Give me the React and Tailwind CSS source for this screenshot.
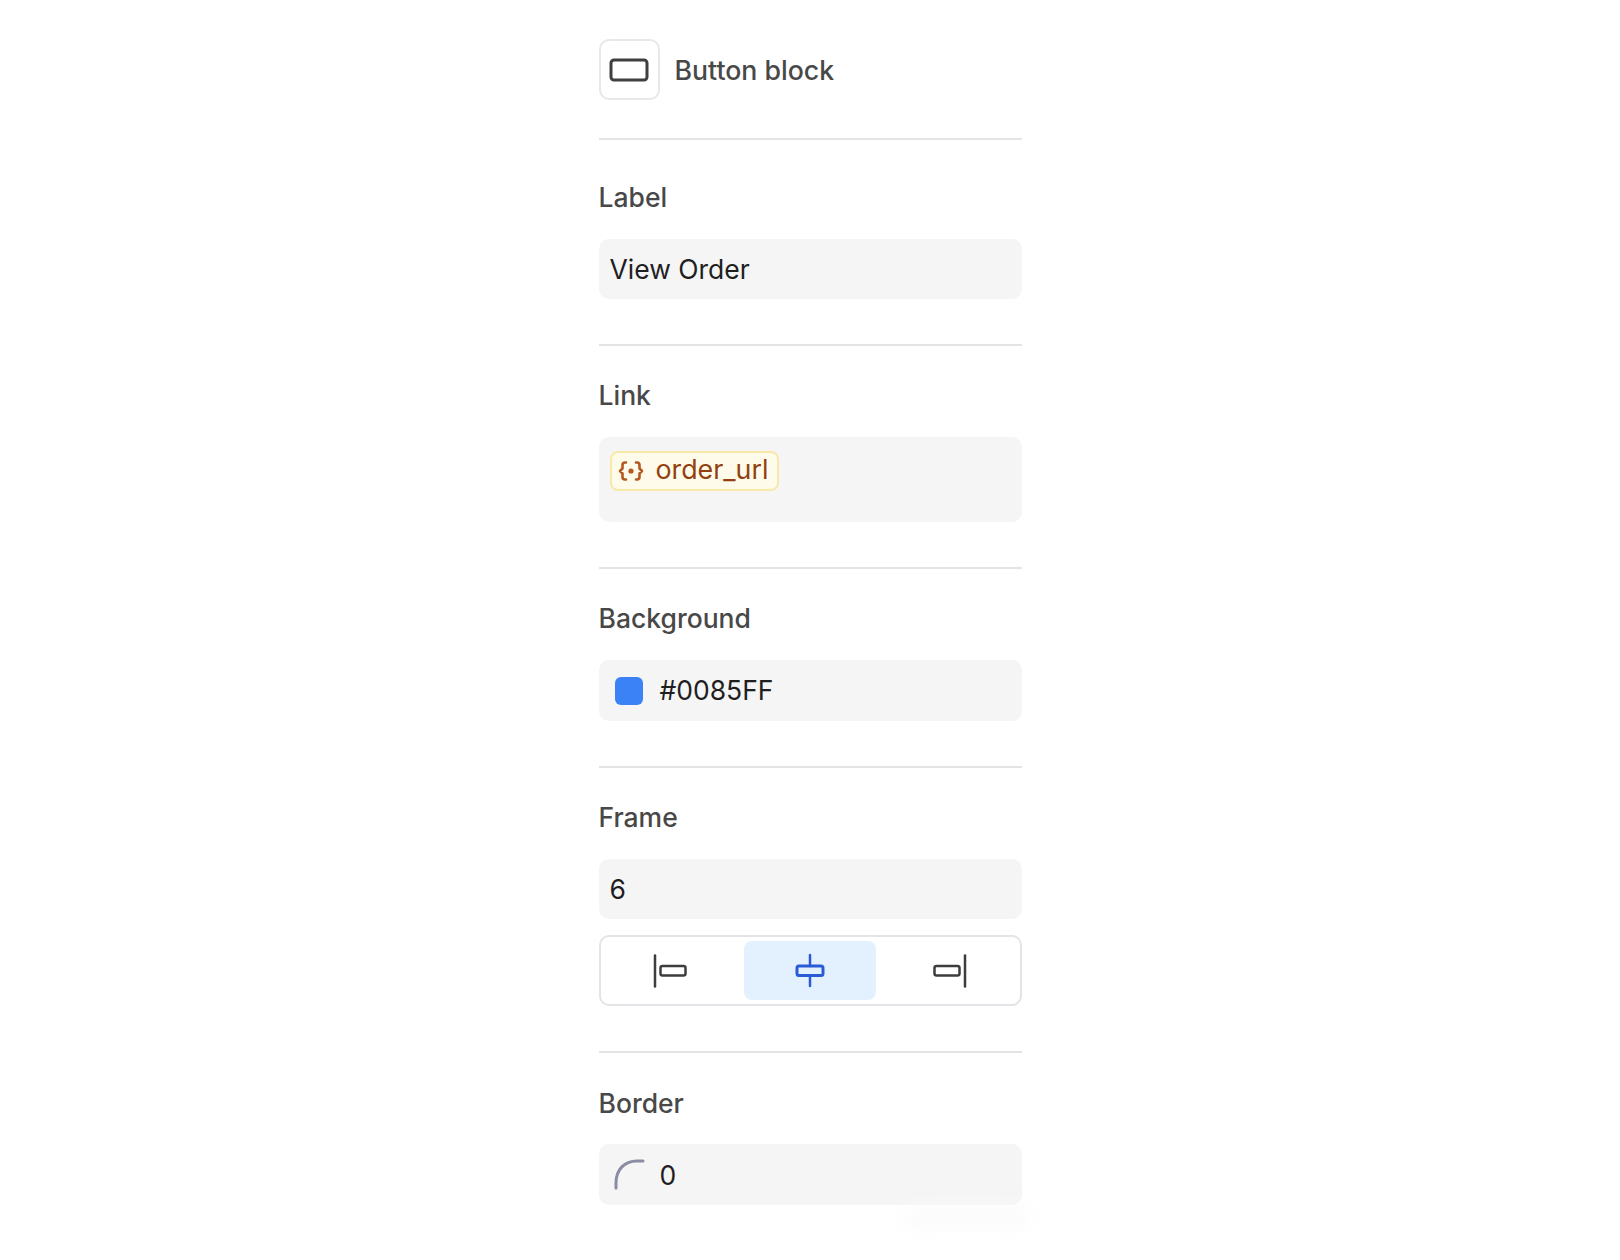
const FONT = "font-['Inter',sans-serif]";

function Field({ children, tall }) {
  return (
    <div
      className={`flex items-center rounded-[10px] bg-[#f5f5f6] px-[11px] pt-[1px] text-[26.5px] text-[#1f1f1f] ${tall ? "h-[61px]" : "h-[60px]"}`}
    >
      {children}
    </div>
  );
}

function Section({ label, first, last, children }) {
  return (
    <section
      className={`border-[#e4e4e6] ${last ? "pt-[33px]" : "border-b-2 pb-[45px]"} ${first ? "pt-[40px]" : ""} ${!first && !last ? "pt-[32px]" : ""}`}
    >
      <div className={`h-[34px] text-[26.5px] leading-[34px] font-medium text-[#484848] ${last ? "mb-[24px]" : "mb-[25px]"}`}>
        {label}
      </div>
      {children}
    </section>
  );
}

function AlignIcon({ align, active }) {
  const color = active ? "#2a5bd7" : "#3d3d3d";
  return (
    <svg className="mt-[1px]" width="36" height="36" viewBox="0 0 36 36" fill="none" stroke={color} strokeWidth="2.5" strokeLinecap="round">
      {align === "left" && (
        <>
          <path d="M2 2.5V33.5" />
          <rect x="7.5" y="13" width="25" height="9.5" rx="2" />
        </>
      )}
      {align === "center" && (
        <>
          <path d="M18 2V13M18 22.5V33" />
          <rect x="5" y="13" width="26" height="9.5" rx="2" strokeWidth="3" />
        </>
      )}
      {align === "right" && (
        <>
          <path d="M34 2.5V33.5" />
          <rect x="3.5" y="13" width="25" height="9.5" rx="2" />
        </>
      )}
    </svg>
  );
}

export default function App() {
  return (
    <div className={`relative min-h-[1260px] bg-white ${FONT}`}>
      <div className="mx-auto w-[423px] pt-[39px]">
        <div className="flex items-center gap-[15px] border-b-2 border-[#e4e4e6] pb-[38px]">
          <div className="flex h-[61px] w-[61px] items-center justify-center rounded-[10px] border-2 border-[#e8e8ea]">
            <svg width="40" height="26" viewBox="0 0 40 26" fill="none" stroke="#3f3f3f" strokeWidth="3">
              <rect x="2" y="3" width="36" height="20" rx="3" />
            </svg>
          </div>
          <span className="pt-[2px] text-[26.7px] font-medium text-[#484848]">Button block</span>
        </div>

        <Section label="Label" first>
          <Field>View Order</Field>
        </Section>

        <Section label="Link">
          <div className="h-[85px] rounded-[10px] bg-[#f5f5f6] pt-[14px] pl-[11px]">
            <div className="flex h-[40px] w-[169px] items-center gap-[10px] rounded-[8px] border-2 border-[#f8e9a8] bg-[#fefbeb] pl-[5px] text-[26.8px] text-[#93400f]">
              <svg className="mr-[1px]" width="28" height="26" viewBox="0 0 28 26" fill="none" stroke="#b4581f" strokeWidth="2.6" strokeLinecap="round" strokeLinejoin="round">
                <path d="M9 4.500H8C6.500 4.500 5.500 5.500 5.500 7V10.500L3 13L5.500 15.500V19C5.500 20.500 6.500 21.500 8 21.500H9" />
                <path d="M19 4.500H20C21.500 4.500 22.500 5.500 22.500 7V10.500L25 13L22.500 15.500V19C22.500 20.500 21.500 21.500 20 21.500H19" />
                <circle cx="14" cy="13" r="2.600" fill="#b4581f" stroke="none" />
              </svg>
              <span className="pb-[3px]">order_url</span>
            </div>
          </div>
        </Section>

        <Section label="Background">
          <Field tall>
            <span className="mr-[17px] ml-[5px] h-[28px] w-[28px] rounded-[6px] bg-[#3b82f6]" />
            #0085FF
          </Field>
        </Section>

        <Section label="Frame">
          <Field>6</Field>
          <div className="mt-[16px] flex h-[71px] gap-[7px] rounded-[10px] border-2 border-[#e4e4e8] p-[4px]">
            <button className="flex flex-1 items-center justify-center">
              <AlignIcon align="left" />
            </button>
            <button className="flex flex-1 items-center justify-center rounded-[8px] bg-[#e3f1fe]">
              <AlignIcon align="center" active />
            </button>
            <button className="flex flex-1 items-center justify-center">
              <AlignIcon align="right" />
            </button>
          </div>
        </Section>

        <Section label="Border" last>
          <Field tall>
            <svg className="mr-[15px] ml-[3px] mb-[2px]" width="32" height="32" viewBox="0 0 32 32" fill="none" stroke="#8a8ca3" strokeWidth="3" strokeLinecap="round">
              <path d="M3 30V25C3 12 11 3 24 3H30" />
            </svg>
            <span className="pt-[1px]">0</span>
          </Field>
        </Section>
      </div>
      {/* faint smudge under the last field */}
      <div className="absolute top-[1206px] left-[905px] h-[22px] w-[125px] rounded-full bg-[#fbfbfb] blur-[9px]" />
    </div>
  );
}
